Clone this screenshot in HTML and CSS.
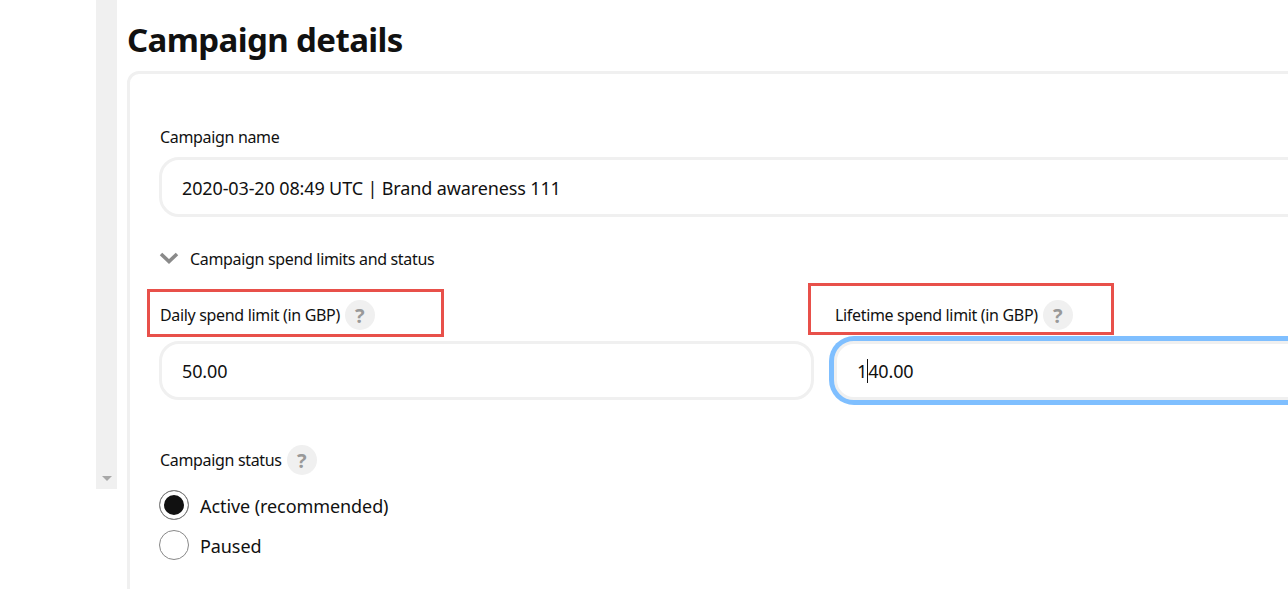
FILE: index.html
```html
<!DOCTYPE html>
<html lang="en">
<head>
  <meta charset="UTF-8" />
  <title>Campaign details</title>
  <link rel="stylesheet" href="styles.css">
</head>
<body>
  <div class="page">
    <div class="scrollbar">
      <span class="scroll-arrow"></span>
    </div>
    <main class="main">
      <h1>Campaign details</h1>
      <section class="card">
        <label class="label">Campaign name</label>
        <div class="input">2020-03-20 08:49 UTC | Brand awareness 111</div>

        <div class="toggle">
          <svg class="chevron" width="20" height="12" viewBox="0 0 20 12">
            <path d="M2 2 L10 9.5 L18 2" fill="none" stroke="#8a8a8a" stroke-width="3.6" />
          </svg>
          <span>Campaign spend limits and status</span>
        </div>

        <div class="limits">
          <div class="field">
            <div class="label-row">
              <label class="label">Daily spend limit (in GBP)</label>
              <span class="help">?</span>
            </div>
            <div class="input">50.00</div>
          </div>
          <div class="field">
            <div class="label-row">
              <label class="label">Lifetime spend limit (in GBP)</label>
              <span class="help">?</span>
            </div>
            <div class="input focused">1<span class="caret"></span>40.00</div>
          </div>
        </div>

        <div class="label-row status-label">
          <label class="label">Campaign status</label>
          <span class="help">?</span>
        </div>
        <div class="radio-row">
          <span class="radio checked"></span>
          <span class="radio-text">Active (recommended)</span>
        </div>
        <div class="radio-row">
          <span class="radio"></span>
          <span class="radio-text">Paused</span>
        </div>
      </section>
    </main>
  </div>

  <!-- annotations drawn over the screenshot -->
  <div class="mark mark-daily"></div>
  <div class="mark mark-lifetime"></div>
</body>
</html>
```

FILE: styles.css
```css
* { box-sizing: border-box; margin: 0; padding: 0; }
html, body { height: 100%; overflow: hidden; }
body { background: #fff; color: #111; font-family: "Noto Sans", "Open Sans", sans-serif; font-size: 18px; position: relative; }

.page { display: flex; align-items: flex-start; padding-left: 96px; width: 1700px; }
.scrollbar { width: 21px; height: 489px; background: #f0f0f0; display: flex; align-items: flex-end; justify-content: center; padding-bottom: 8px; flex: none; }
.scroll-arrow { width: 0; height: 0; border-left: 5px solid transparent; border-right: 5px solid transparent; border-top: 5px solid #a8a8a8; }

.main { margin-left: 10px; width: 1400px; }
h1 { font-size: 33px; font-weight: 700; line-height: 44px; margin-top: 18px; margin-bottom: 9px; color: #111; letter-spacing: -0.6px; }

.card { border: 3px solid #f0f0f0; border-radius: 12px; padding: 51px 29px 40px 29px; height: 560px; }
.label { font-size: 16px; line-height: 24px; letter-spacing: -0.33px; display: block; padding-left: 1px; }

.input { height: 60px; border: 3px solid #f0f0f0; border-radius: 20px; padding: 2px 20px 0; display: flex; align-items: center; font-size: 18px; letter-spacing: -0.13px; background: #fff; margin-top: 8px; }
.input.focused { box-shadow: 0 0 0 5px #7fbfff; }
.caret { display: inline-block; width: 1px; height: 24px; background: #111; }

.toggle { display: flex; align-items: center; gap: 11px; font-size: 16px; letter-spacing: -0.33px; margin-top: 30px; height: 24px; }
.chevron { flex: none; margin-top: -3px; }

.limits { display: grid; grid-template-columns: 655px 655px; column-gap: 20px; margin-top: 29px; }
.label-row { display: flex; align-items: center; gap: 5px; height: 30px; }
.limits .input { margin-top: 11px; height: 59px; padding-top: 1px; }
.help { width: 30px; height: 30px; border-radius: 50%; background: #f0f0f0; color: #999; font-weight: 700; font-size: 20px; display: flex; align-items: center; justify-content: center; flex: none; }

.status-label { margin-top: 45px; }
.radio-row { display: flex; align-items: center; gap: 11px; height: 30px; margin-top: 10px; font-size: 18px; letter-spacing: -0.08px; }
.status-label + .radio-row { margin-top: 15px; }
.radio { width: 30px; height: 30px; border-radius: 50%; border: 1px solid #888; background: #fff; flex: none; }
.radio.checked { background: #111; box-shadow: inset 0 0 0 4px #fff; }
.radio-text { padding-top: 2px; }

.mark { position: absolute; border: 3px solid #e8504a; }
.mark-daily { left: 147px; top: 289px; width: 297px; height: 48px; }
.mark-lifetime { left: 808px; top: 283px; width: 306px; height: 52px; }
```
